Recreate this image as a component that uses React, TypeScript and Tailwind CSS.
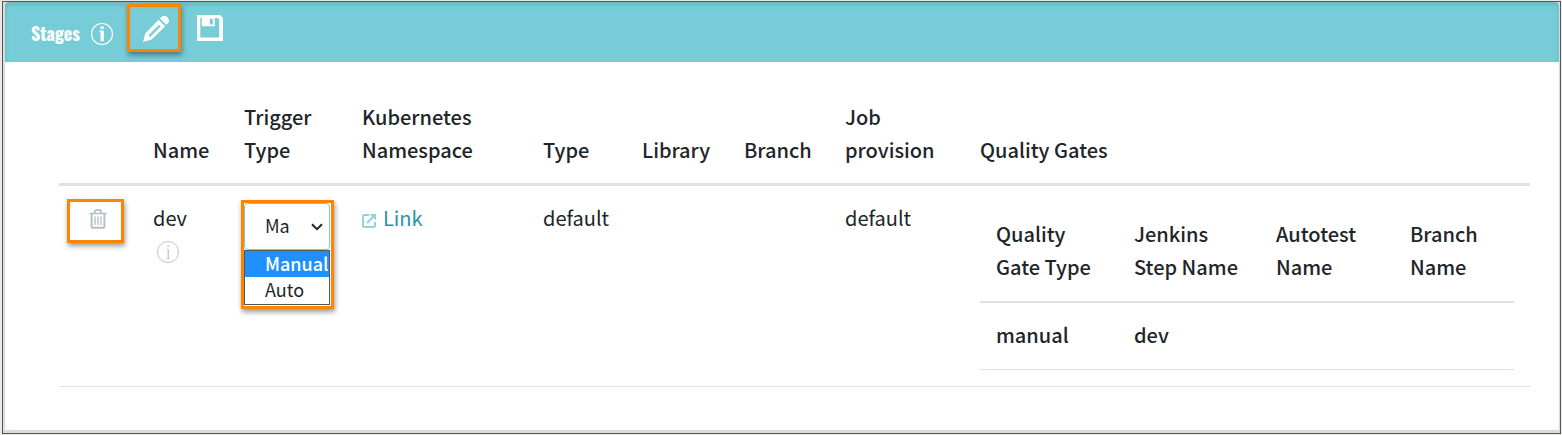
import React from "react";

const highlight = "border-[3px] border-[#ff8400] shadow-[1px_3px_5px_rgba(0,0,0,0.4)]";

function InfoIcon({ bold = false }: { bold?: boolean }) {
  return (
    <svg viewBox="0 0 24 24" className="h-6 w-6" fill="none" aria-hidden="true">
      <circle cx="12" cy="12" r="10.5" stroke="currentColor" strokeWidth={bold ? 1.2 : 1} />
      {bold ? (
        <path d="M10.4 4.6h3.4v2.2h-3.4zM9.4 8.6h4.4v10.6h-3.2v-9H9.4z" fill="currentColor" />
      ) : (
        <path d="M11.3 5.2h1.8v1.8h-1.8zM10.6 9h2.3v9.2h1v.8h-3.3v-.8h1V9.8h-1z" fill="currentColor" />
      )}
    </svg>
  );
}

function PencilIcon() {
  return (
    <svg viewBox="0 0 28 28" className="h-7 w-7" aria-hidden="true">
      <path
        fill="currentColor"
        fillRule="evenodd"
        d="M1 27 3.2 18.4 16.6 4.8 23.2 11.2 9.8 24.6ZM6.4 20.4 8.2 22 18.6 11.4 17 9.8Z"
      />
      <path fill="currentColor" d="M17.8 3.6 19.4 2Q22.2-.2 24.8 1.8L25.8 2.8Q28 5.6 26 8.2L24.4 9.8Z" />
    </svg>
  );
}

function SaveIcon() {
  return (
    <svg viewBox="0 0 26 26" className="h-[26px] w-[26px]" aria-hidden="true">
      <path
        fill="currentColor"
        fillRule="evenodd"
        d="M0 0H23L26 3V26H0ZM3.3 3V22.6H22.2V4.6L20.6 3H17.8V11.2H4.8V3ZM12.8 3.8V9.6H15.8V3.8Z"
      />
    </svg>
  );
}

function TrashIcon() {
  return (
    <svg viewBox="0 0 18 20" className="h-5 w-[18px]" fill="none" stroke="currentColor" aria-hidden="true">
      <path d="M.5 4.5h17M5.5 4 6.5 1.2h5L12.5 4" strokeWidth="1.7" />
      <path d="M2.6 5v12.2q0 1.6 1.6 1.6h9.6q1.6 0 1.6-1.6V5" strokeWidth="1.9" />
      <path d="M6 7.5v8.5M9 7.5v8.5M12 7.5v8.5" strokeWidth="1.3" />
    </svg>
  );
}

function ExternalIcon() {
  return (
    <svg viewBox="0 0 14 14" className="inline-block h-[14px] w-[14px] text-[#8fd3dc]" fill="none" stroke="currentColor" aria-hidden="true">
      <path d="M7 1H2.2Q1 1 1 2.2v9.6Q1 13 2.2 13h9.6q1.2 0 1.2-1.2V8" strokeWidth="2" />
      <path d="M5 9 11.5 2.5" strokeWidth="2" />
      <path d="M7.5 0h6.5v6.5z" fill="currentColor" stroke="none" />
    </svg>
  );
}

const columns = [
  { label: "", width: "w-[78px]" },
  { label: "Name", width: "w-[91px]" },
  { label: "Trigger Type", width: "w-[118px]" },
  { label: "Kubernetes Namespace", width: "w-[181px]" },
  { label: "Type", width: "w-[99px]" },
  { label: "Library", width: "w-[102px]" },
  { label: "Branch", width: "w-[101px]" },
  { label: "Job provision", width: "w-[135px]" },
  { label: "Quality Gates", width: "" },
];

const gateColumns = [
  { label: "Quality Gate Type", width: "w-[138px]" },
  { label: "Jenkins Step Name", width: "w-[142px]" },
  { label: "Autotest Name", width: "w-[134px]" },
  { label: "Branch Name", width: "" },
];

function QualityGates() {
  return (
    <table className="w-full table-fixed border-collapse font-medium">
      <thead>
        <tr className="border-b-2 border-[#dee2e6]">
          {gateColumns.map((c) => (
            <th key={c.label} scope="col" className={`pt-4 pr-3 pb-[18px] pl-4 text-left align-bottom font-medium ${c.width}`}>
              {c.label}
            </th>
          ))}
        </tr>
      </thead>
      <tbody>
        <tr className="border-b border-[#dee2e6]">
          <td className="px-4 pt-[15px] pb-[18px]">manual</td>
          <td className="px-4 pt-[15px] pb-[18px]">dev</td>
          <td />
          <td />
        </tr>
      </tbody>
    </table>
  );
}

function TriggerSelect() {
  return (
    <div className="relative mt-px w-[86px] text-[18px] leading-[26px]">
      <select
        aria-label="Trigger type"
        defaultValue="Manual"
        className="block h-[47px] w-full appearance-none rounded border border-[#76cdd8] bg-white pr-[39px] pb-1 pl-5 text-[#212529] outline-none"
      >
        <option>Manual</option>
        <option>Auto</option>
      </select>
      <svg
        viewBox="0 0 12 8"
        className="pointer-events-none absolute top-5 right-[7px] h-2 w-3"
        fill="none"
        stroke="#212529"
        strokeWidth="2"
        aria-hidden="true"
      >
        <path d="M1 1.2 6 6.2 11 1.2" />
      </svg>
      <ul role="listbox" aria-label="Trigger type options" className="absolute top-[47px] left-0 z-10 w-full border border-[#555] bg-white pb-px">
        <li role="option" aria-selected="true" className="bg-[#1e90ff] pb-0.5 pl-5 leading-6 font-medium text-white">
          Manual
        </li>
        <li role="option" aria-selected="false" className="pb-0.5 pl-5 leading-6">
          Auto
        </li>
      </ul>
      <div className={`pointer-events-none absolute -top-[3px] -right-1 -left-[3px] z-20 h-[109px] ${highlight}`} />
    </div>
  );
}

export default function App() {
  return (
    <div className="bg-[#e9e9e7] py-px pr-px pl-0.5 font-['Noto_Sans_CJK_SC','Noto_Sans',sans-serif] text-[20px] leading-[33px] text-[#212529]">
      <div className="border border-[#555] bg-[#dcdcdc] pr-px pb-[3px] pl-0.5">
        <section className="rounded-t bg-white pb-[43px] shadow-[inset_0_0_5px_rgba(0,0,0,0.06)]">
          <header className="flex h-15 items-start rounded-t bg-[#76cdd7] pl-[26px] text-white shadow-[inset_0_3px_5px_rgba(0,0,0,0.1)]">
            <h1 className="mt-[15px] w-[50px] font-['Oswald','Liberation_Sans_Narrow','Liberation_Sans',sans-serif] text-[18px] font-bold">
              Stages
            </h1>
            <button type="button" aria-label="About stages" className="mt-5 ml-[9px]">
              <InfoIcon bold />
            </button>
            <button
              type="button"
              aria-label="Edit stage"
              className={`mt-0.5 ml-[13px] flex h-12 w-[54px] justify-center pt-2 pl-1 ${highlight}`}
            >
              <PencilIcon />
            </button>
            <button type="button" aria-label="Save stages" className="mt-[13px] ml-4">
              <SaveIcon />
            </button>
          </header>
          <div className="pt-[22px] pr-[29px] pl-[54px]">
            <table className="w-full table-fixed border-collapse">
              <thead>
                <tr className="border-b-[3px] border-[#dee2e6]">
                  {columns.map((c, i) => (
                    <th key={i} scope="col" className={`pt-4 pb-[17px] pl-4 text-left align-bottom font-medium ${c.width}`}>
                      {c.label}
                    </th>
                  ))}
                </tr>
              </thead>
              <tbody>
                <tr className="border-b border-[#dee2e6] align-top">
                  <td className="pt-[13px] pl-2">
                    <button
                      type="button"
                      aria-label="Delete stage dev"
                      className={`flex h-11 w-[57px] items-start justify-center pt-[7px] pl-1 text-[#b3bec5] ${highlight}`}
                    >
                      <TrashIcon />
                    </button>
                  </td>
                  <td className="pt-[15px] pl-4">
                    dev
                    <button type="button" aria-label="About stage dev" className="mt-1.5 ml-[3px] block text-[#c4c4c4]">
                      <InfoIcon />
                    </button>
                  </td>
                  <td className="pt-4 pl-4">
                    <TriggerSelect />
                  </td>
                  <td className="pt-[15px] pl-4">
                    <a href="#link" className="text-[#2396a6]">
                      <ExternalIcon />
                      <span className="ml-[7px]">Link</span>
                    </a>
                  </td>
                  <td className="pt-[15px] pl-4">default</td>
                  <td />
                  <td />
                  <td className="pt-[15px] pl-4">default</td>
                  <td className="px-4 pt-[15px] pb-4">
                    <QualityGates />
                  </td>
                </tr>
              </tbody>
            </table>
          </div>
        </section>
      </div>
    </div>
  );
}
